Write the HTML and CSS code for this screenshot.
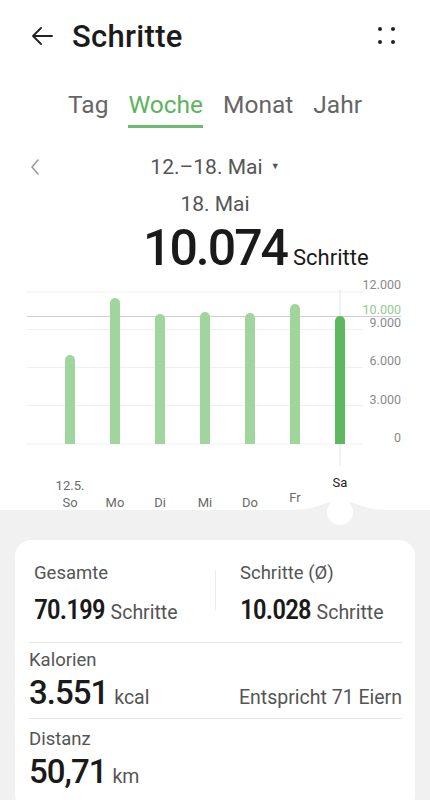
FILE: index.html
```html
<!DOCTYPE html>
<html lang="de">
<head>
    <meta charset="UTF-8">
    <meta name="viewport" content="width=device-width, initial-scale=1.0">
    <title>Schritte</title>
    <link rel="stylesheet" href="styles.css">
</head>
<body>

    <header class="topbar">
        <svg class="back" width="24" height="24" viewBox="0 0 24 24">
            <path d="M22 12H3M11 4L3 12L11 20" fill="none" stroke="#222" stroke-width="1.8" stroke-linecap="round" stroke-linejoin="round"/>
        </svg>
        <h1 class="title">Schritte</h1>
        <svg class="more" width="18" height="18" viewBox="0 0 18 18">
            <circle cx="2" cy="2" r="2" fill="#222"/>
            <circle cx="15" cy="2" r="2" fill="#222"/>
            <circle cx="2" cy="15" r="2" fill="#222"/>
            <circle cx="15" cy="15" r="2" fill="#222"/>
        </svg>
    </header>

    <nav class="tabs">
        <span class="tab">Tag</span>
        <span class="tab active">Woche</span>
        <span class="tab">Monat</span>
        <span class="tab">Jahr</span>
    </nav>

    <div class="period">
        <svg class="prev" width="10" height="16" viewBox="0 0 10 16">
            <path d="M8 1L2 8L8 15" fill="none" stroke="#999" stroke-width="1.6" stroke-linecap="round" stroke-linejoin="round"/>
        </svg>
        <div class="range">12.–18. Mai <span class="caret">▼</span></div>
    </div>

    <div class="day">18. Mai</div>
    <div class="total">
        <span class="total-value">10.074</span>
        <span class="total-unit">Schritte</span>
    </div>

    <svg class="chart" width="430" height="259" viewBox="0 276 430 259">
        <!-- raster -->
        <g stroke="#efefef" stroke-width="1">
            <line x1="27" y1="292" x2="363" y2="292"/>
            <line x1="27" y1="329.5" x2="363" y2="329.5"/>
            <line x1="27" y1="367.5" x2="363" y2="367.5"/>
            <line x1="27" y1="405.5" x2="363" y2="405.5"/>
            <line x1="27" y1="444" x2="363" y2="444"/>
        </g>
        <line x1="27" y1="316.5" x2="401" y2="316.5" stroke="#cfcfcf" stroke-width="1"/>
        <line x1="340" y1="290" x2="340" y2="466" stroke="#e2e2e2" stroke-width="1"/>

        <g class="axis" text-anchor="end">
            <text x="401" y="289">12.000</text>
            <text x="401" y="313.5" class="goal">10.000</text>
            <text x="401" y="327">9.000</text>
            <text x="401" y="365">6.000</text>
            <text x="401" y="403.5">3.000</text>
            <text x="401" y="441.5">0</text>
        </g>

        <!-- balken: oben abgerundet -->
        <g fill="#a0d69e">
            <path d="M65 444V360a5 5 0 0 1 10 0V444Z"/>
            <path d="M110 444V303a5 5 0 0 1 10 0V444Z"/>
            <path d="M155 444V319a5 5 0 0 1 10 0V444Z"/>
            <path d="M200 444V317a5 5 0 0 1 10 0V444Z"/>
            <path d="M245 444V318a5 5 0 0 1 10 0V444Z"/>
            <path d="M290 444V309a5 5 0 0 1 10 0V444Z"/>
        </g>
        <path d="M335 444V321a5 5 0 0 1 10 0V444Z" fill="#5db85f"/>

        <g class="days" text-anchor="middle">
            <text x="70" y="490">12.5.</text>
            <text x="70" y="507">So</text>
            <text x="115" y="507">Mo</text>
            <text x="160" y="507">Di</text>
            <text x="205" y="507">Mi</text>
            <text x="250" y="507">Do</text>
            <text x="295" y="502">Fr</text>
            <text x="340" y="487" class="current">Sa</text>
        </g>

        <path d="M0 510H294C318 510 322 501 340 501C358 501 362 510 386 510H430V535H0Z" fill="#f1f1f1"/>
        <circle cx="340" cy="512" r="13" fill="#fff"/>
    </svg>

    <main class="summary">
        <section class="card">
            <div class="pair">
                <div class="cell first">
                    <div class="label">Gesamte</div>
                    <div class="value-line"><span class="num">70.199</span><span class="unit">Schritte</span></div>
                </div>
                <div class="divider"></div>
                <div class="cell second">
                    <div class="label">Schritte (Ø)</div>
                    <div class="value-line"><span class="num">10.028</span><span class="unit">Schritte</span></div>
                </div>
            </div>

            <div class="row calories">
                <div class="label">Kalorien</div>
                <div class="value-line">
                    <span class="big">3.551</span><span class="unit">kcal</span>
                    <span class="note">Entspricht 71 Eiern</span>
                </div>
            </div>

            <div class="row distance">
                <div class="label">Distanz</div>
                <div class="value-line"><span class="big">50,71</span><span class="unit">km</span></div>
            </div>
        </section>
    </main>

</body>
</html>
```

FILE: styles.css
```css
body {
    margin: 0;
    font-family: Roboto, "Noto Sans", sans-serif;
    color: #1b1b1b;
    background: #fff;
    width: 430px;
    overflow: hidden;
}
.topbar {
    height: 72px;
    display: flex;
    align-items: center;
    padding: 0 34px 0 30px;
}
.back {
    display: block;
}
.title {
    margin: 0 0 0 18px;
    font-size: 31px;
    font-weight: 500;
    letter-spacing: 0.3px;
}
.more {
    margin-left: auto;
    display: block;
}
.tabs {
    display: flex;
    justify-content: center;
    gap: 20px;
    margin-top: 19px;
}
.tab {
    font-size: 24.5px;
    line-height: 28px;
    color: #666;
    padding-bottom: 6px;
    border-bottom: 3px solid transparent;
}
.tab.active {
    color: #5cb45e;
    border-bottom-color: #6dbd6e;
}
.period {
    display: grid;
    grid-template-columns: 1fr auto 1fr;
    align-items: center;
    height: 28px;
    margin-top: 24px;
}
.prev {
    margin-left: 30px;
    display: block;
}
.range {
    font-size: 21px;
    line-height: 28px;
    color: #555;
}
.caret {
    font-size: 9px;
    vertical-align: 5px;
    margin-left: 3px;
}
.day {
    margin-top: 10px;
    text-align: center;
    font-size: 21px;
    line-height: 28px;
    color: #555;
}
.total {
    display: grid;
    grid-template-columns: 1fr auto 1fr;
    align-items: baseline;
    margin-top: 2px;
    height: 56px;
}
.total-value {
    grid-column: 2;
    font-size: 50px;
    line-height: 56px;
    font-weight: 500;
    letter-spacing: -2px;
    color: #1a1a1a;
}
.total-unit {
    grid-column: 3;
    font-size: 22px;
    margin-left: 6px;
    color: #1a1a1a;
}
.chart {
    display: block;
}
.axis text {
    font-size: 12.5px;
    fill: #8a8a8a;
}
.axis text.goal {
    fill: #92c992;
}
.days text {
    font-size: 13px;
    fill: #6a6a6a;
}
.days text.current {
    fill: #222;
}
.summary {
    background: #f1f1f1;
    padding: 5px 15px 30px;
}
.card {
    background: #fff;
    border-radius: 16px;
    padding: 22px 13px 20px 14px;
}
.pair {
    display: grid;
    grid-template-columns: 1fr 1px 1fr;
    padding-bottom: 16px;
    border-bottom: 1px solid #e6e6e6;
}
.cell.first {
    padding-left: 5px;
}
.cell.second {
    padding-left: 24px;
}
.divider {
    background: #ececec;
    height: 40px;
    margin-top: 8px;
}
.label {
    font-size: 18.5px;
    line-height: 22px;
    color: #555;
}
.value-line {
    display: flex;
    align-items: baseline;
}
.pair .value-line {
    margin-top: 10px;
    height: 32px;
}
.num {
    font-family: "Roboto Condensed", "Liberation Sans Narrow", Roboto, sans-serif;
    font-size: 28px;
    font-weight: 500;
    letter-spacing: -1.2px;
    line-height: 32px;
    color: #1a1a1a;
}
.unit {
    font-size: 19.5px;
    color: #555;
    margin-left: 6px;
}
.row {
    padding-top: 6px;
}
.row .value-line {
    margin-top: 3px;
    height: 38px;
}
.calories {
    padding-bottom: 6px;
    border-bottom: 1px solid #e6e6e6;
}
.distance {
    padding-top: 9px;
}
.big {
    font-size: 33px;
    font-weight: 500;
    letter-spacing: -1px;
    line-height: 38px;
    color: #1a1a1a;
}
.note {
    margin-left: auto;
    font-size: 19.5px;
    color: #555;
}
```
